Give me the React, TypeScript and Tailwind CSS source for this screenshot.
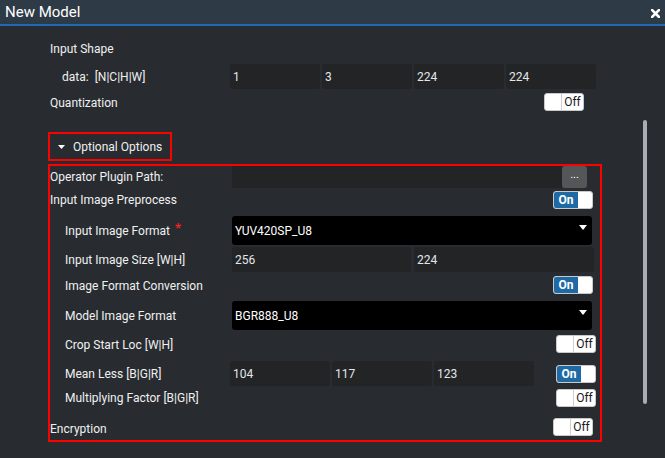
import React from "react";

function Toggle({ on, className = "" }: { on?: boolean; className?: string }) {
  return (
    <div
      className={`flex h-[18px] w-[40px] shrink-0 overflow-hidden rounded-[3px] border border-[#c9c9c9] bg-white text-[12px] leading-none ${className}`}
    >
      {on ? (
        <>
          <div className="flex w-[24px] items-center justify-center bg-[#1f6aa5] font-bold text-white">On</div>
          <div className="flex-1" />
        </>
      ) : (
        <>
          <div className="w-[17px] border-r border-[#cfcfcf]" />
          <div className="flex flex-1 items-center justify-center text-[#1a1a1a]">Off</div>
        </>
      )}
    </div>
  );
}

function Field({ value, w }: { value: string; w: string }) {
  return (
    <div className={`flex h-full items-center rounded-[3px] bg-[#222426] pl-[3px] text-[12px] text-[#e4e6ea] ${w}`}>
      {value}
    </div>
  );
}

function Select({ value }: { value: string }) {
  return (
    <div className="relative flex h-full w-[360px] items-center rounded-[3px] bg-black pl-[3px] text-[12px] text-white">
      {value}
      <svg className="absolute right-[5px] top-[9px]" width="8" height="5" viewBox="0 0 8 5">
        <path d="M0 0 L8 0 L4 5 Z" fill="#ffffff" />
      </svg>
    </div>
  );
}

export default function App() {
  return (
    <div className="relative h-[458px] w-[665px] overflow-hidden bg-[#282c30] font-[Roboto,sans-serif] text-[12px] text-[#f0f0f0]">
      {/* title bar */}
      <div className="flex h-[24px] items-center justify-between bg-[#2e3a46] pl-[5px] pr-[5px]">
        <span className="text-[15px] text-white">New Model</span>
        <svg width="9" height="9" viewBox="0 0 9 9" className="mt-[2px]">
          <path d="M1 1 L8 8 M8 1 L1 8" stroke="#ffffff" strokeWidth="2.6" strokeLinecap="square" />
        </svg>
      </div>
      <div className="h-[2px] bg-[#1e6bb5]" />

      <div className="ml-[48px] w-[554px]">
        {/* Input Shape */}
        <div className="mt-[11px] flex h-[24px] items-center pl-[2px]">Input Shape</div>
        {/* data row */}
        <div className="mt-[3px] flex h-[25px] items-center">
          <div className="flex w-[182px] items-center pl-[14px]">
            <span>data:</span>
            <span className="ml-[6px]">[N|C|H|W]</span>
          </div>
          <div className="flex h-full gap-[2px]">
            <Field value="1" w="w-[90px]" />
            <Field value="3" w="w-[90px]" />
            <Field value="224" w="w-[90px]" />
            <Field value="224" w="w-[90px]" />
          </div>
        </div>
        {/* Quantization */}
        <div className="mt-[2px] flex h-[22px] items-center justify-between pl-[2px] pr-[18px]">
          <span className="pt-[2px]">Quantization</span>
          <Toggle />
        </div>

        {/* Optional Options */}
        <div className="mt-[19px] flex h-[29px] w-[124px] items-center border-2 border-[#ff0000] pl-[8px]">
          <svg width="7" height="4" viewBox="0 0 7 4">
            <path d="M0 0 L7 0 L3.5 4 Z" fill="#ffffff" />
          </svg>
          <span className="ml-[8px]">Optional Options</span>
        </div>

        {/* red box */}
        <div className="mt-[3px] h-[278px] w-[554px] border-2 border-[#ff0000]">
          {/* Operator Plugin Path */}
          <div className="flex h-[22px] items-center">
            <div className="w-[182px]">Operator Plugin Path:</div>
            <div className="flex h-full">
              <div className="h-full w-[330px] rounded-l-[3px] bg-[#222426]" />
              <div className="flex h-[22px] w-[25px] items-center justify-center rounded-[3px] bg-[#555657] pb-[4px] text-[11px] text-white">
                ...
              </div>
            </div>
          </div>
          {/* Input Image Preprocess */}
          <div className="flex h-[24px] items-center justify-between pr-[7px]">
            <span>Input Image Preprocess</span>
            <Toggle on />
          </div>
          {/* Input Image Format */}
          <div className="mt-[4px] flex h-[29px] items-center">
            <div className="w-[182px] pl-[15px]">
              Input Image Format<span className="relative top-[-3px] ml-[5px] text-[13px] font-bold text-[#ff2020]">*</span>
            </div>
            <Select value="YUV420SP_U8" />
          </div>
          {/* Input Image Size */}
          <div className="mt-[2px] flex h-[25px] items-center">
            <div className="w-[182px] pl-[15px]">Input Image Size [W|H]</div>
            <div className="flex h-full gap-[3px]">
              <Field value="256" w="w-[179px]" />
              <Field value="224" w="w-[180px]" />
            </div>
          </div>
          {/* Image Format Conversion */}
          <div className="flex h-[25px] items-center justify-between pr-[7px]">
            <span className="pl-[15px] pt-[2px]">Image Format Conversion</span>
            <Toggle on />
          </div>
          {/* Model Image Format */}
          <div className="mt-[4px] flex h-[29px] items-center">
            <div className="w-[182px] pl-[15px]">Model Image Format</div>
            <Select value="BGR888_U8" />
          </div>
          {/* Crop Start Loc */}
          <div className="flex h-[28px] items-center justify-between pr-[4px]">
            <span className="pl-[15px] pt-[2px]">Crop Start Loc [W|H]</span>
            <Toggle />
          </div>
          {/* Mean Less */}
          <div className="mt-[3px] flex h-[25px] items-center">
            <div className="w-[180px] pl-[15px]">Mean Less [B|G|R]</div>
            <div className="flex h-full gap-[2px]">
              <Field value="104" w="w-[100px]" />
              <Field value="117" w="w-[100px]" />
              <Field value="123" w="w-[100px]" />
            </div>
            <div className="ml-auto pr-[4px]">
              <Toggle on />
            </div>
          </div>
          {/* Multiplying Factor */}
          <div className="flex h-[24px] items-center justify-between pr-[4px]">
            <span className="pl-[15px]">Multiplying Factor [B|G|R]</span>
            <Toggle />
          </div>
          {/* Encryption */}
          <div className="mt-[4px] flex h-[26px] items-center justify-between pr-[7px]">
            <span className="pt-[4px]">Encryption</span>
            <Toggle />
          </div>
        </div>
      </div>

      {/* scrollbar */}
      <div className="absolute left-[643px] top-[120px] h-[284px] w-[4px] rounded-[2px] bg-[#a9acb3]" />
    </div>
  );
}
